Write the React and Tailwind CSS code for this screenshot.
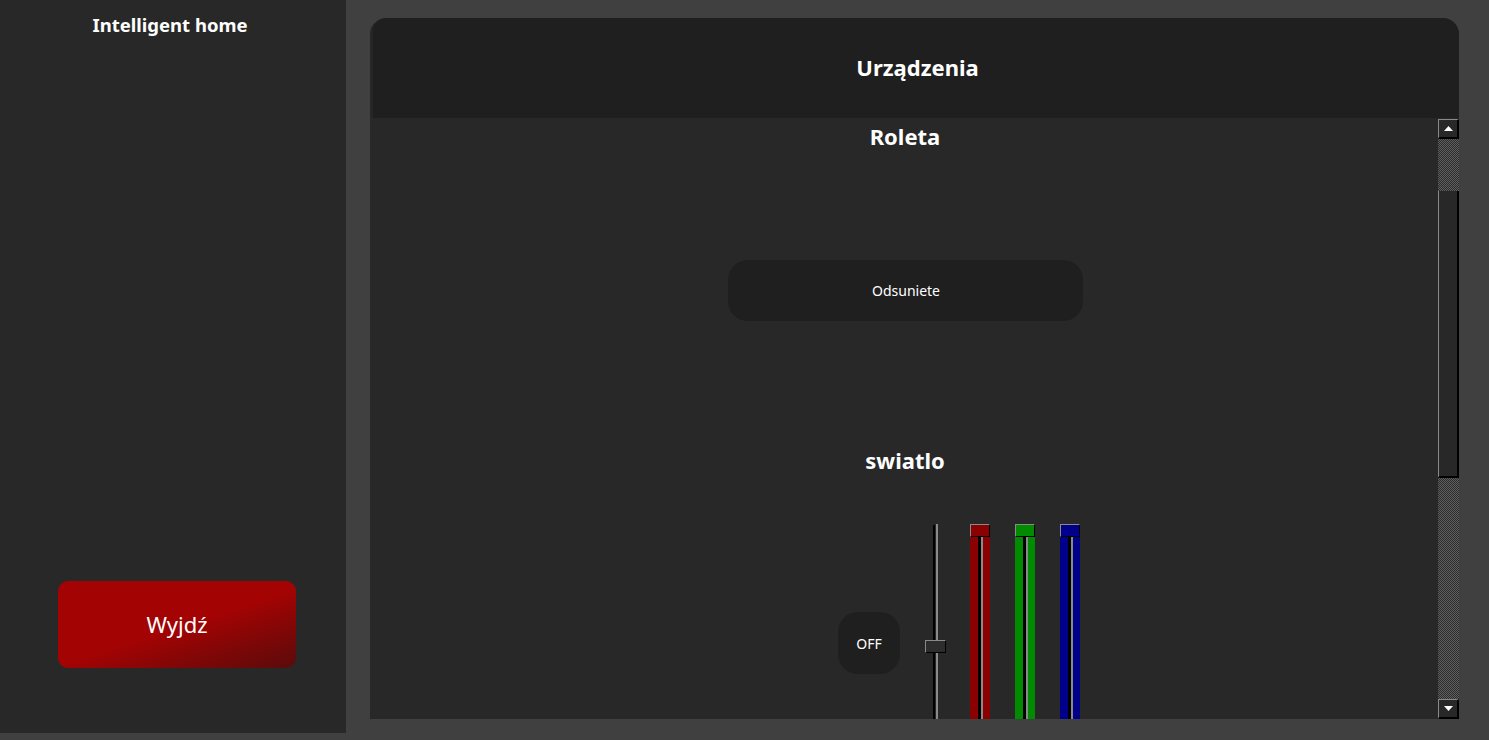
import React from "react";

const font = { fontFamily: '"Noto Sans", "Open Sans", sans-serif' };

function ColorSlider({ color }) {
  return (
    <div className="flex h-[238px] w-[20px] flex-col">
      <div className={`h-[13px] w-[20px] border-t border-l border-t-[#8a8a8a] border-l-[#8a8a8a] border-b border-r border-b-black border-r-black ${color}`} />
      <div className="flex flex-1">
        <div className={`w-[8px] ${color}`} />
        <div className="w-[3px] bg-black" />
        <div className="w-[2px] bg-[#8a8a8a]" />
        <div className={`w-[7px] ${color}`} />
      </div>
    </div>
  );
}

function ScrollButton({ up }) {
  return (
    <div className="flex h-[20px] w-[21px] items-center justify-center border-t border-l border-t-[#8a8a8a] border-l-[#8a8a8a] border-b-2 border-r-2 border-b-black border-r-black bg-[#282828]">
      <svg width="9" height="5" viewBox="0 0 9 5">
        {up ? (
          <path d="M4.5 0 L9 5 L0 5 Z" fill="#fff" />
        ) : (
          <path d="M0 0 L9 0 L4.5 5 Z" fill="#fff" />
        )}
      </svg>
    </div>
  );
}

const checker =
  "bg-[repeating-conic-gradient(#5e5e5e_0%_25%,#2e2e2e_0%_50%)] bg-[length:2px_2px]";

export default function App() {
  return (
    <div className="flex h-[740px] w-[1489px] overflow-hidden bg-[#404040] text-white" style={font}>
      <div className="flex h-[733px] w-[346px] flex-col bg-[#282828]">
        <div className="pt-[12px] pr-[6px] text-center text-[18.5px] font-bold leading-[26px]">Intelligent home</div>
        <button className="mt-auto mb-[65px] ml-[58px] flex h-[87px] w-[238px] items-center justify-center rounded-[10px] bg-[linear-gradient(162deg,#a30303_52%,#5a0b0b_100%)] text-[22px] text-white">
          Wyjdź
        </button>
      </div>

      <div className="ml-[24px] mt-[18px] flex h-[701px] w-[1089px] flex-col overflow-hidden rounded-t-[16px] bg-[#262626]">
        <div className="ml-[3px] flex h-[100px] items-center justify-center rounded-tl-[14px] rounded-tr-[16px] bg-[#1f1f1f] pb-[2px] pl-[3px] text-[22px] font-bold">
          Urządzenia
        </div>
        <div className="flex flex-1 overflow-hidden bg-[#282828]">
          <div className="flex flex-1 flex-col items-center overflow-hidden">
            <div className="pt-[3px] pl-[2px] text-[22px] font-bold leading-[30px]">Roleta</div>
            <button className="mt-[109px] ml-[2px] flex h-[61px] w-[355px] shrink-0 items-center justify-center rounded-[20px] bg-[#1f1f1f] pl-[2px] text-[14px] text-white">
              Odsuniete
            </button>
            <div className="mt-[124px] pl-[2px] text-[22px] font-bold leading-[30px]">swiatlo</div>
            <div className="mt-[49px] ml-[468px] flex h-[238px] shrink-0 items-center gap-[25px] self-start">
              <button className="flex h-[62px] w-[62px] items-center justify-center rounded-[20px] bg-[#1f1f1f] text-[14px] text-white">
                OFF
              </button>
              <div className="relative flex h-[238px] w-[20px] justify-center">
                <div className="mt-[1px] w-[2px] bg-black" />
                <div className="w-[1px]" />
                <div className="w-[2px] bg-[#8a8a8a]" />
                <div className="absolute left-0 top-[116px] h-[13px] w-[21px] border-t border-l border-t-[#8a8a8a] border-l-[#8a8a8a] border-b border-r border-b-black border-r-black bg-[#2d2d2d]" />
              </div>
              <ColorSlider color="bg-[#8b0000]" />
              <ColorSlider color="bg-[#008b00]" />
              <ColorSlider color="bg-[#00008b]" />
            </div>
          </div>
          <div className="flex w-[21px] flex-col pt-[1px]">
            <ScrollButton up />
            <div className={`h-[52px] ${checker}`} />
            <div className="h-[287px] border-l border-l-[#8a8a8a] border-b-2 border-r-2 border-b-black border-r-black bg-[#282828]" />
            <div className={`flex-1 ${checker}`} />
            <ScrollButton />
          </div>
        </div>
      </div>
    </div>
  );
}
